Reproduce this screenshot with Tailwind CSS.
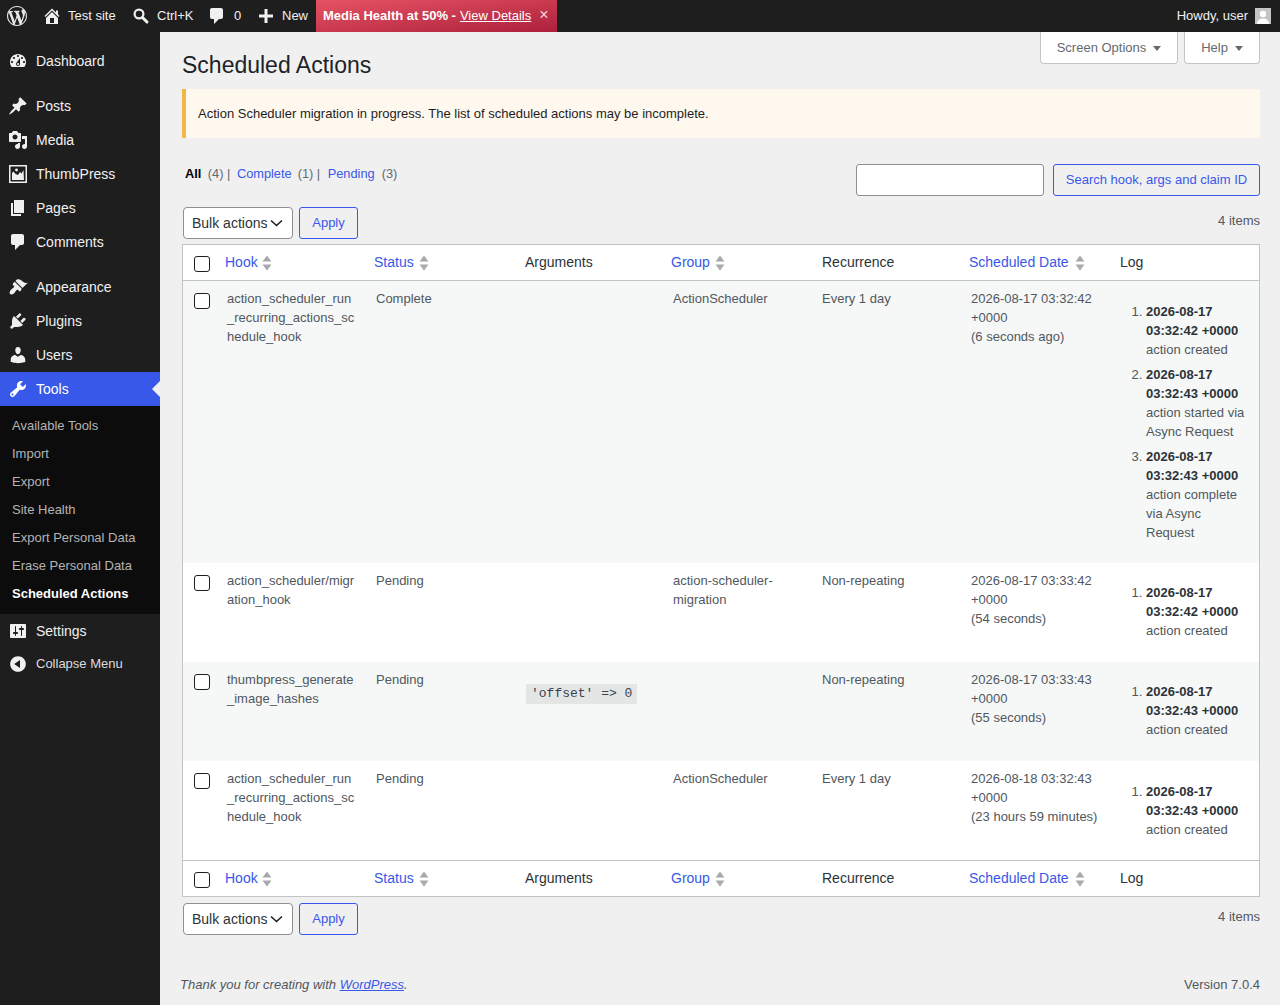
<!DOCTYPE html>
<html lang="en">
<head>
    <meta charset="UTF-8">
    <title>Scheduled Actions</title>
    <script src="https://cdn.jsdelivr.net/npm/@tailwindcss/browser@4"></script>
</head>
<body class="h-[1005px] overflow-hidden bg-[#f0f0f1] font-['Liberation_Sans',sans-serif] text-[13px] text-[#3c434a]">
    <!-- admin bar -->
    <header class="flex h-8 items-center bg-[#1e1e1e] text-[13px] text-[#f0f0f1]">
        <svg class="ml-[7px] h-5 w-5 fill-[#e8e8e8]" viewBox="0 0 20 20"><path d="M20 10c0-5.51-4.49-10-10-10C4.48 0 0 4.49 0 10c0 5.52 4.48 10 10 10 5.51 0 10-4.48 10-10zM7.78 15.37L4.37 6.22c.55-.02 1.17-.08 1.17-.08.5-.06.44-1.13-.06-1.11 0 0-1.45.11-2.37.11-.18 0-.37 0-.58-.01C4.12 2.69 6.87 1.11 10 1.11c2.33 0 4.45.87 6.05 2.34-.68-.11-1.65.39-1.65 1.58 0 .74.45 1.36.9 2.1.35.61.55 1.36.55 2.46 0 1.49-1.4 5-1.4 5l-3.03-8.37c.54-.02.82-.17.82-.17.5-.05.44-1.25-.06-1.22 0 0-1.44.12-2.38.12-.87 0-2.33-.12-2.33-.12-.5-.03-.56 1.2-.06 1.22l.92.08 1.26 3.41zM17.41 10c.24-.64.74-1.87.43-4.25.7 1.29 1.05 2.71 1.05 4.25 0 3.29-1.73 6.24-4.4 7.78.97-2.59 1.94-5.2 2.92-7.78zM6.1 18.09C3.12 16.65 1.11 13.53 1.11 10c0-1.3.23-2.48.72-3.59C3.25 10.3 4.67 14.2 6.1 18.09zm4.03-6.63l2.58 6.98c-.86.29-1.76.45-2.71.45-.79 0-1.57-.11-2.29-.33.81-2.38 1.62-4.74 2.42-7.1z"/></svg>
        <svg class="ml-[15px] h-5 w-5 fill-[#f0f0f1]" viewBox="0 0 20 20"><path d="M16 8.5l1.53 1.53-1.06 1.06L10 4.62l-6.47 6.47-1.06-1.06L10 2.5l4 4v-2h2v4zm-6-2.46l6 5.99V18H4v-5.97zM12 17v-5H8v5h4z"/></svg>
        <span class="ml-[6px] w-[48px]">Test site</span>
        <svg class="ml-[15px] h-5 w-5" viewBox="0 0 20 20" fill="none" stroke="#f0f0f1"><circle cx="8" cy="8" r="4.4" stroke-width="2.2"/><path d="M11.5 11.5L16 16" stroke-width="3" stroke-linecap="round"/></svg>
        <span class="ml-[6px] w-[36px]">Ctrl+K</span>
        <svg class="ml-[14px] h-5 w-5 fill-[#f0f0f1]" viewBox="0 0 20 20"><path d="M5 2h9c1.1 0 2 .9 2 2v7c0 1.1-.9 2-2 2h-2l-5 5v-5H5c-1.1 0-2-.9-2-2V4c0-1.1.9-2 2-2z"/></svg>
        <span class="ml-[7px] w-[8px]">0</span>
        <svg class="ml-[14px] h-5 w-5 fill-[#f0f0f1]" viewBox="0 0 20 20"><path d="M17 8.5v3h-5.5V17h-3v-5.5H3v-3h5.5V3h3v5.5z"/></svg>
        <span class="ml-[6px] w-[26px]">New</span>
        <div class="ml-2 flex h-8 w-[241px] items-center bg-gradient-to-br from-[#e65265] to-[#ad1f3b] pl-[7px] text-white">
            <span class="font-bold">Media Health at 50% -</span>
            <a href="#" class="ml-1 underline">View Details</a>
            <span class="ml-2 -mt-[3px] text-[16px] leading-none text-[#f5d5da]">×</span>
        </div>
        <span class="ml-auto">Howdy, user</span>
        <div class="mr-[9px] ml-[7px] h-4 w-4 overflow-hidden bg-[#c4c4c4]">
            <svg class="h-4 w-4 fill-white" viewBox="0 0 16 16"><circle cx="8" cy="6" r="3.2"/><path d="M2 16c0-4 3-5.5 6-5.5s6 1.5 6 5.5z"/></svg>
        </div>
    </header>

    <div class="flex h-[973px]">
        <!-- admin menu -->
        <nav class="w-40 shrink-0 bg-[#1e1e1e] pt-3 text-[14px] text-[#f0f0f1]">
            <a href="#" class="flex h-[34px] items-center gap-2 pl-2">
                <svg class="h-5 w-5 fill-[#f0f0f1]" viewBox="0 0 20 20"><path fill-rule="evenodd" d="M3.76 16h12.48c1.1-1.37 1.76-3.11 1.76-5 0-4.42-3.58-8-8-8s-8 3.58-8 8c0 1.89.66 3.63 1.76 5zM10 4c.55 0 1 .45 1 1s-.45 1-1 1-1-.45-1-1 .45-1 1-1zM6 6c.55 0 1 .45 1 1s-.45 1-1 1-1-.45-1-1 .45-1 1-1zm8 0c.55 0 1 .45 1 1s-.45 1-1 1-1-.45-1-1 .45-1 1-1zm-5.37 5.55L12 7v6c0 1.1-.9 2-2 2s-2-.9-2-2c0-.57.24-1.08.63-1.45zM4 10c.55 0 1 .45 1 1s-.45 1-1 1-1-.45-1-1 .45-1 1-1zm12 0c.55 0 1 .45 1 1s-.45 1-1 1-1-.45-1-1 .45-1 1-1zm-5 3c0-.55-.45-1-1-1s-1 .45-1 1 .45 1 1 1 1-.45 1-1z"/></svg>
                Dashboard
            </a>
            <a href="#" class="mt-[11px] flex h-[34px] items-center gap-2 pl-2">
                <svg class="h-5 w-5 fill-[#f0f0f1]" viewBox="0 0 20 20"><path d="M10.44 3.02l1.82-1.82 6.36 6.35-1.83 1.82c-1.05-.68-2.48-.57-3.41.36l-.75.75c-.92.93-1.04 2.35-.35 3.41l-1.83 1.82-2.41-2.41-2.8 2.79c-.42.42-3.38 2.71-3.8 2.29s1.86-3.39 2.28-3.81l2.79-2.79L4.1 9.36l1.83-1.82c1.05.69 2.48.57 3.4-.36l.75-.75c.93-.92 1.05-2.35.36-3.41z"/></svg>
                Posts
            </a>
            <a href="#" class="flex h-[34px] items-center gap-2 pl-2">
                <svg class="h-5 w-5 fill-[#f0f0f1]" viewBox="0 0 20 20"><path fill-rule="evenodd" d="M13 11V4c0-.55-.45-1-1-1h-1.67L9 1H5L3.67 3H2c-.55 0-1 .45-1 1v7c0 .55.45 1 1 1h10c.55 0 1-.45 1-1zM7 4.5c1.38 0 2.5 1.12 2.5 2.5S8.38 9.5 7 9.5 4.5 8.38 4.5 7 5.62 4.5 7 4.5zM14 6h5v10.5c0 1.38-1.12 2.5-2.5 2.5S14 17.88 14 16.5s1.12-2.5 2.5-2.5c.17 0 .34.02.5.05V9h-3V6zm-4 8.05V13h2v3.5c0 1.38-1.12 2.5-2.5 2.5S7 17.88 7 16.5 8.12 14 9.5 14c.17 0 .34.02.5.05z"/></svg>
                Media
            </a>
            <a href="#" class="flex h-[34px] items-center gap-2 pl-2">
                <svg class="h-5 w-5 fill-[#f0f0f1]" viewBox="0 0 20 20"><path fill-rule="evenodd" d="M1 1h18v18H1zM2.5 2.5v15h15v-15z"/><circle cx="8.5" cy="6" r="1.4"/><path d="M4 16V9l1.5-1.5 2 2.5L10 11l2-3 1.5 1.5L15.5 6l.5 10z"/></svg>
                ThumbPress
            </a>
            <a href="#" class="flex h-[34px] items-center gap-2 pl-2">
                <svg class="h-5 w-5 fill-[#f0f0f1]" viewBox="0 0 20 20"><path d="M6 15V2h10v13H6zm-1 1h8v2H3V5h2v11z"/></svg>
                Pages
            </a>
            <a href="#" class="flex h-[34px] items-center gap-2 pl-2">
                <svg class="h-5 w-5 fill-[#f0f0f1]" viewBox="0 0 20 20"><path d="M5 2h9c1.1 0 2 .9 2 2v7c0 1.1-.9 2-2 2h-2l-5 5v-5H5c-1.1 0-2-.9-2-2V4c0-1.1.9-2 2-2z"/></svg>
                Comments
            </a>
            <a href="#" class="mt-[11px] flex h-[34px] items-center gap-2 pl-2">
                <svg class="h-5 w-5 fill-[#f0f0f1]" viewBox="0 0 20 20"><path d="M14.48 11.06L7.41 3.99l1.5-1.5c.5-.56 2.3-.47 3.51.32 1.21.8 1.43 1.28 2.91 2.1 1.18.64 2.45 1.26 4.45.85zm-.71.71L6.7 4.7 4.93 6.47c-.39.39-.39 1.02 0 1.41l1.06 1.06c.39.39.39 1.03 0 1.42-.6.6-1.43 1.11-2.21 1.69-.35.26-.7.53-1.01.84-1.43 1.43-1.4 3.38-.7 4.08s2.65.73 4.08-.7c.31-.31.58-.66.84-1.01.58-.78 1.09-1.61 1.69-2.21.39-.39 1.03-.39 1.42 0l1.06 1.06c.39.39 1.02.39 1.41 0z"/></svg>
                Appearance
            </a>
            <a href="#" class="flex h-[34px] items-center gap-2 pl-2">
                <svg class="h-5 w-5 fill-[#f0f0f1]" viewBox="0 0 20 20"><path d="M13.11 4.36L9.87 7.6 8 5.73l3.24-3.24c.35-.34 1.05-.2 1.56.32.52.51.66 1.21.31 1.55zm-8 1.77l.91-1.12 9.01 9.01-1.19.84c-.71.71-2.63 1.16-3.82 1.16H6.14L4.9 17.26c-.59.59-1.54.59-2.12 0-.59-.58-.59-1.53 0-2.12l1.24-1.24v-3.88c0-1.13.4-3.19 1.09-3.89zm7.26 3.97l3.24-3.24c.34-.35 1.04-.21 1.55.31.52.51.66 1.21.31 1.55l-3.24 3.25z"/></svg>
                Plugins
            </a>
            <a href="#" class="flex h-[34px] items-center gap-2 pl-2">
                <svg class="h-5 w-5 fill-[#f0f0f1]" viewBox="0 0 20 20"><path d="M10 9.25c-2.27 0-2.73-3.44-2.73-3.44C7 4.02 7.82 2 9.97 2c2.16 0 2.98 2.02 2.71 3.81 0 0-.41 3.44-2.68 3.44zm0 2.57L12.72 10c2.39 0 4.52 2.33 4.52 4.53v2.49s-3.65 1.13-7.24 1.13c-3.65 0-7.24-1.13-7.24-1.13v-2.49c0-2.25 1.94-4.48 4.47-4.48z"/></svg>
                Users
            </a>
            <a href="#" class="relative flex h-[34px] items-center gap-2 bg-[#3858e9] pl-2 text-white">
                <svg class="h-5 w-5 fill-white" viewBox="0 0 20 20"><path d="M16.68 9.77c-1.34 1.34-3.3 1.67-4.95.99l-5.41 6.52c-.99.99-2.59.99-3.58 0s-.99-2.59 0-3.57l6.52-5.42c-.68-1.65-.35-3.61.99-4.95 1.28-1.28 3.12-1.62 4.72-1.06l-2.89 2.89 2.82 2.82 2.86-2.87c.53 1.58.18 3.39-1.08 4.65zM3.81 16.21c.4.39 1.04.39 1.43 0 .4-.4.4-1.04 0-1.43-.39-.4-1.03-.4-1.43 0-.39.39-.39 1.03 0 1.43z"/></svg>
                Tools
                <span class="absolute top-[9px] right-0 border-y-8 border-r-8 border-y-transparent border-r-[#f0f0f1]"></span>
            </a>
            <ul class="bg-[#0c0c0c] pt-[6px] pb-[6px] text-[13px] text-[#b4b4b4]">
                <li class="flex h-7 items-center pl-3">Available Tools</li>
                <li class="flex h-7 items-center pl-3">Import</li>
                <li class="flex h-7 items-center pl-3">Export</li>
                <li class="flex h-7 items-center pl-3">Site Health</li>
                <li class="flex h-7 items-center pl-3">Export Personal Data</li>
                <li class="flex h-7 items-center pl-3">Erase Personal Data</li>
                <li class="flex h-7 items-center pl-3 font-bold text-white">Scheduled Actions</li>
            </ul>
            <a href="#" class="flex h-[34px] items-center gap-2 pl-2">
                <svg class="h-5 w-5 fill-[#f0f0f1]" viewBox="0 0 20 20"><path fill-rule="evenodd" d="M18 16V4c0-.55-.45-1-1-1H3c-.55 0-1 .45-1 1v12c0 .55.45 1 1 1h14c.55 0 1-.45 1-1zM8 11h1c.55 0 1 .45 1 1s-.45 1-1 1H8v1.5c0 .28-.22.5-.5.5s-.5-.22-.5-.5V13H6c-.55 0-1-.45-1-1s.45-1 1-1h1V5.5c0-.28.22-.5.5-.5s.5.22.5.5V11zm5-2h-1c-.55 0-1-.45-1-1s.45-1 1-1h1V5.5c0-.28.22-.5.5-.5s.5.22.5.5V7h1c.55 0 1 .45 1 1s-.45 1-1 1h-1v5.5c0 .28-.22.5-.5.5s-.5-.22-.5-.5V9z"/></svg>
                Settings
            </a>
            <a href="#" class="flex h-8 items-center gap-2 pl-2 text-[13px] text-[#dcdcde]">
                <svg class="h-5 w-5 fill-[#f0f0f1]" viewBox="0 0 20 20"><path fill-rule="evenodd" d="M10 2.16c4.33 0 7.84 3.51 7.84 7.84s-3.51 7.84-7.84 7.84S2.16 14.33 2.16 10 5.71 2.16 10 2.16zm2 11.72V6.12L6.18 9.97z"/></svg>
                Collapse Menu
            </a>
        </nav>

        <main class="flex min-w-0 flex-1 flex-col pr-5 pl-[22px]">
            <div class="flex items-start justify-between">
                <h1 class="pt-[18px] text-[23px] leading-[30px] font-normal text-[#1d2327]">Scheduled Actions</h1>
                <div class="flex gap-[6px] text-[#646970]">
                    <button class="flex h-8 w-[138px] items-center justify-center gap-[7px] rounded-b border border-t-0 border-[#c3c4c7] bg-white">
                        Screen Options
                        <span class="mt-px border-x-4 border-t-[5px] border-x-transparent border-t-[#646970]"></span>
                    </button>
                    <button class="flex h-8 w-[76px] items-center justify-center gap-[7px] rounded-b border border-t-0 border-[#c3c4c7] bg-white">
                        Help
                        <span class="mt-px border-x-4 border-t-[5px] border-x-transparent border-t-[#646970]"></span>
                    </button>
                </div>
            </div>

            <div class="mt-[9px] flex h-[49px] items-center border-l-4 border-[#f0b849] bg-[#fef8ee] pl-3 text-[#1e1e1e]">
                Action Scheduler migration in progress. The list of scheduled actions may be incomplete.
            </div>

            <div class="mt-[26px] flex items-start justify-between">
                <p class="pl-[3px] text-[12.8px] leading-[19px] text-[#646970]">
                    <b class="text-[#000]">All</b><span class="ml-[6.5px]">(4) |</span><a href="#" class="ml-[6.5px] text-[#3858e9]">Complete</a><span class="ml-[6px]">(1) |</span><a href="#" class="ml-[7.5px] text-[#3858e9]">Pending</a><span class="ml-[7px]">(3)</span>
                </p>
                <div class="flex gap-[9px]">
                    <input type="search" class="h-8 w-[188px] rounded-[3px] border border-[#8c8f94] bg-white">
                    <button class="h-8 w-[207px] rounded-[3px] border border-[#3858e9] text-[#3858e9]">Search hook, args and claim ID</button>
                </div>
            </div>

            <div class="mt-[11px] flex items-start gap-[6px] pl-px">
                <div class="relative">
                    <select class="h-8 w-[110px] appearance-none rounded border border-[#8c8f94] bg-white pl-2 text-[14px] text-[#2c3338]"><option>Bulk actions</option></select>
                    <svg class="absolute top-[12px] right-[10px] h-2 w-[13px]" viewBox="0 0 13 8" fill="none" stroke="#1e1e1e" stroke-width="1.6"><path d="M1 1.5l5.5 5 5.5-5"/></svg>
                </div>
                <button class="h-8 w-[59px] rounded-[3px] border border-[#3858e9] text-[#3858e9]">Apply</button>
                <span class="ml-auto pt-1 leading-[19px] text-[#50575e]">4 items</span>
            </div>

            <table class="mt-[5px] w-full table-fixed border-separate border-spacing-0 border border-[#c3c4c7] bg-white text-left leading-[19px] text-[#50575e]">
                <colgroup><col class="w-[34px]"><col class="w-[149px]"><col class="w-[149px]"><col class="w-[148px]"><col class="w-[149px]"><col class="w-[149px]"><col class="w-[149px]"><col class="w-[149px]"></colgroup>
                <thead class="text-[14px] text-[#2c3338]">
                    <tr class="h-9">
                        <th class="border-b border-[#c3c4c7] p-0 align-top font-normal"><input type="checkbox" class="mt-[11px] ml-[11px] block h-4 w-4 appearance-none rounded-[3px] border border-[#1e1e1e] bg-white"></th>
                        <th class="border-b border-[#c3c4c7] pl-2 font-normal"><a href="#" class="flex items-center gap-1 text-[#3858e9]">Hook <svg class="h-4 w-[10px] fill-[#a7aaad]" viewBox="0 0 10 16"><path d="M5 .5l4.5 6H.5zM5 15.5l4.5-6H.5z"/></svg></a></th>
                        <th class="border-b border-[#c3c4c7] pl-2 font-normal"><a href="#" class="flex items-center gap-[5px] text-[#3858e9]">Status <svg class="h-4 w-[10px] fill-[#a7aaad]" viewBox="0 0 10 16"><path d="M5 .5l4.5 6H.5zM5 15.5l4.5-6H.5z"/></svg></a></th>
                        <th class="border-b border-[#c3c4c7] pl-[10px] font-normal">Arguments</th>
                        <th class="border-b border-[#c3c4c7] pl-2 font-normal"><a href="#" class="flex items-center gap-[5px] text-[#3858e9]">Group <svg class="h-4 w-[10px] fill-[#a7aaad]" viewBox="0 0 10 16"><path d="M5 .5l4.5 6H.5zM5 15.5l4.5-6H.5z"/></svg></a></th>
                        <th class="border-b border-[#c3c4c7] pl-[10px] font-normal">Recurrence</th>
                        <th class="border-b border-[#c3c4c7] pl-2 font-normal"><a href="#" class="flex items-center gap-[6px] text-[#3858e9]">Scheduled Date <svg class="h-4 w-[10px] fill-[#a7aaad]" viewBox="0 0 10 16"><path d="M5 .5l4.5 6H.5zM5 15.5l4.5-6H.5z"/></svg></a></th>
                        <th class="border-b border-[#c3c4c7] pl-[10px] font-normal">Log</th>
                    </tr>
                </thead>
                <tbody>
                    <tr class="bg-[#f6f7f7]">
                        <td class="p-0 align-top"><input type="checkbox" class="mt-3 ml-[11px] block h-4 w-4 appearance-none rounded-[3px] border border-[#1e1e1e] bg-white"></td>
                        <td class="px-[10px] py-2 align-top break-words">action_scheduler_run_recurring_actions_schedule_hook</td>
                        <td class="px-[10px] py-2 align-top">Complete</td>
                        <td class="px-[10px] py-2 align-top"></td>
                        <td class="px-[10px] py-2 align-top">ActionScheduler</td>
                        <td class="px-[10px] py-2 align-top">Every 1 day</td>
                        <td class="px-[10px] py-2 align-top">2026-08-17 03:32:42 +0000<br>(6 seconds ago)</td>
                        <td class="px-[10px] py-2 align-top">
                            <ol class="mt-[12.5px] mb-[13.5px] ml-[26px] list-decimal">
                                <li class="mb-[6px]"><b class="text-[#2c3338]">2026-08-17 03:32:42 +0000</b><br>action created</li>
                                <li class="mb-[6px]"><b class="text-[#2c3338]">2026-08-17 03:32:43 +0000</b><br>action started via Async Request</li>
                                <li class="mb-[6px]"><b class="text-[#2c3338]">2026-08-17 03:32:43 +0000</b><br>action complete via Async Request</li>
                            </ol>
                        </td>
                    </tr>
                    <tr>
                        <td class="p-0 align-top"><input type="checkbox" class="mt-3 ml-[11px] block h-4 w-4 appearance-none rounded-[3px] border border-[#1e1e1e] bg-white"></td>
                        <td class="px-[10px] py-2 align-top break-words">action_scheduler/migration_hook</td>
                        <td class="px-[10px] py-2 align-top">Pending</td>
                        <td class="px-[10px] py-2 align-top"></td>
                        <td class="px-[10px] py-2 align-top">action-scheduler-migration</td>
                        <td class="px-[10px] py-2 align-top">Non-repeating</td>
                        <td class="px-[10px] py-2 align-top">2026-08-17 03:33:42 +0000<br>(54 seconds)</td>
                        <td class="px-[10px] py-2 align-top">
                            <ol class="mt-3 mb-[14px] ml-[26px] list-decimal">
                                <li class="mb-[6px]"><b class="text-[#2c3338]">2026-08-17 03:32:42 +0000</b><br>action created</li>
                            </ol>
                        </td>
                    </tr>
                    <tr class="bg-[#f6f7f7]">
                        <td class="p-0 align-top"><input type="checkbox" class="mt-3 ml-[11px] block h-4 w-4 appearance-none rounded-[3px] border border-[#1e1e1e] bg-white"></td>
                        <td class="px-[10px] py-2 align-top break-words">thumbpress_generate_image_hashes</td>
                        <td class="px-[10px] py-2 align-top">Pending</td>
                        <td class="px-[10px] py-2 align-top"><code class="mt-[14px] ml-px block w-fit bg-black/7 px-[5px] font-['Liberation_Mono',monospace] text-[13px] leading-5 whitespace-nowrap text-[#3c434a]">'offset' =&gt; 0</code></td>
                        <td class="px-[10px] py-2 align-top"></td>
                        <td class="px-[10px] py-2 align-top">Non-repeating</td>
                        <td class="px-[10px] py-2 align-top">2026-08-17 03:33:43 +0000<br>(55 seconds)</td>
                        <td class="px-[10px] py-2 align-top">
                            <ol class="mt-3 mb-[14px] ml-[26px] list-decimal">
                                <li class="mb-[6px]"><b class="text-[#2c3338]">2026-08-17 03:32:43 +0000</b><br>action created</li>
                            </ol>
                        </td>
                    </tr>
                    <tr>
                        <td class="p-0 align-top"><input type="checkbox" class="mt-3 ml-[11px] block h-4 w-4 appearance-none rounded-[3px] border border-[#1e1e1e] bg-white"></td>
                        <td class="px-[10px] py-2 align-top break-words">action_scheduler_run_recurring_actions_schedule_hook</td>
                        <td class="px-[10px] py-2 align-top">Pending</td>
                        <td class="px-[10px] py-2 align-top"></td>
                        <td class="px-[10px] py-2 align-top">ActionScheduler</td>
                        <td class="px-[10px] py-2 align-top">Every 1 day</td>
                        <td class="px-[10px] py-2 align-top">2026-08-18 03:32:43 +0000<br>(23 hours 59 minutes)</td>
                        <td class="px-[10px] py-2 align-top">
                            <ol class="mt-[12.5px] mb-[13.5px] ml-[26px] list-decimal">
                                <li class="mb-[6px]"><b class="text-[#2c3338]">2026-08-17 03:32:43 +0000</b><br>action created</li>
                            </ol>
                        </td>
                    </tr>
                </tbody>
                <tfoot class="text-[14px] text-[#2c3338]">
                    <tr class="h-9">
                        <th class="border-t border-[#c3c4c7] p-0 align-top font-normal"><input type="checkbox" class="mt-[11px] ml-[11px] block h-4 w-4 appearance-none rounded-[3px] border border-[#1e1e1e] bg-white"></th>
                        <th class="border-t border-[#c3c4c7] pl-2 font-normal"><a href="#" class="flex items-center gap-1 text-[#3858e9]">Hook <svg class="h-4 w-[10px] fill-[#a7aaad]" viewBox="0 0 10 16"><path d="M5 .5l4.5 6H.5zM5 15.5l4.5-6H.5z"/></svg></a></th>
                        <th class="border-t border-[#c3c4c7] pl-2 font-normal"><a href="#" class="flex items-center gap-[5px] text-[#3858e9]">Status <svg class="h-4 w-[10px] fill-[#a7aaad]" viewBox="0 0 10 16"><path d="M5 .5l4.5 6H.5zM5 15.5l4.5-6H.5z"/></svg></a></th>
                        <th class="border-t border-[#c3c4c7] pl-[10px] font-normal">Arguments</th>
                        <th class="border-t border-[#c3c4c7] pl-2 font-normal"><a href="#" class="flex items-center gap-[5px] text-[#3858e9]">Group <svg class="h-4 w-[10px] fill-[#a7aaad]" viewBox="0 0 10 16"><path d="M5 .5l4.5 6H.5zM5 15.5l4.5-6H.5z"/></svg></a></th>
                        <th class="border-t border-[#c3c4c7] pl-[10px] font-normal">Recurrence</th>
                        <th class="border-t border-[#c3c4c7] pl-2 font-normal"><a href="#" class="flex items-center gap-[6px] text-[#3858e9]">Scheduled Date <svg class="h-4 w-[10px] fill-[#a7aaad]" viewBox="0 0 10 16"><path d="M5 .5l4.5 6H.5zM5 15.5l4.5-6H.5z"/></svg></a></th>
                        <th class="border-t border-[#c3c4c7] pl-[10px] font-normal">Log</th>
                    </tr>
                </tfoot>
            </table>

            <div class="mt-[6px] flex items-start gap-[6px] pl-px">
                <div class="relative">
                    <select class="h-8 w-[110px] appearance-none rounded border border-[#8c8f94] bg-white pl-2 text-[14px] text-[#2c3338]"><option>Bulk actions</option></select>
                    <svg class="absolute top-[12px] right-[10px] h-2 w-[13px]" viewBox="0 0 13 8" fill="none" stroke="#1e1e1e" stroke-width="1.6"><path d="M1 1.5l5.5 5 5.5-5"/></svg>
                </div>
                <button class="h-8 w-[59px] rounded-[3px] border border-[#3858e9] text-[#3858e9]">Apply</button>
                <span class="ml-auto pt-1 leading-[19px] text-[#50575e]">4 items</span>
            </div>

            <footer class="mt-auto -ml-[2px] flex justify-between pb-[11px] leading-[19px] text-[#50575e]">
                <span class="italic">Thank you for creating with <a href="#" class="text-[#3858e9] underline">WordPress</a>.</span>
                <span>Version 7.0.4</span>
            </footer>
        </main>
    </div>
</body>
</html>
